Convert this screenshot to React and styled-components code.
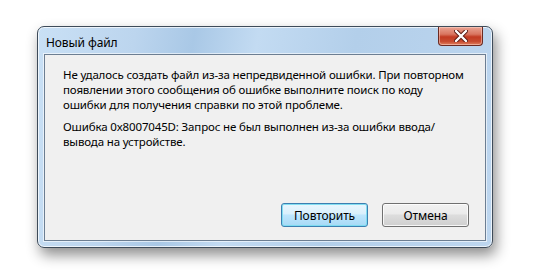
import React from "react";
import styled, { createGlobalStyle } from "styled-components";

const GlobalStyle = createGlobalStyle`
  * {
    margin: 0;
    padding: 0;
    box-sizing: border-box;
  }
  body {
    background: #ffffff;
    font-family: "Noto Sans", "Open Sans", sans-serif;
  }
`;

const Page = styled.div`
  width: 542px;
  height: 276px;
  padding: 26px 0 0 37px;
  background: #ffffff;
`;

const Window = styled.div`
  width: 456px;
  height: 222px;
  display: flex;
  flex-direction: column;
  border: 1px solid #3e4b59;
  border-radius: 7px;
  background: linear-gradient(
    100deg,
    #c9e0f5 0%,
    #bcd5ee 20%,
    #a9c8e6 32%,
    #c3dbf2 45%,
    #b3cfea 65%,
    #bdd6ef 100%
  );
  box-shadow: inset 0 0 0 1px rgba(255, 255, 255, 0.7),
    3px 7px 14px rgba(0, 0, 0, 0.45);
  padding: 0 6px 6px 6px;
`;

const TitleBar = styled.div`
  height: 27px;
  display: flex;
  align-items: flex-start;
  justify-content: space-between;
`;

const Title = styled.span`
  font-size: 12px;
  letter-spacing: -0.1px;
  color: #000;
  padding: 7px 0 0 2px;
`;

const CloseButton = styled.button`
  width: 45px;
  height: 19px;
  margin-right: 3px;
  border: 1px solid #6b2a22;
  border-top: none;
  border-radius: 0 0 4px 4px;
  background: linear-gradient(
    #eaa392 0%,
    #d97560 40%,
    #c23a22 55%,
    #c74b30 80%,
    #e0805f 100%
  );
  box-shadow: inset 0 0 0 1px rgba(255, 220, 210, 0.5);
  display: flex;
  align-items: center;
  justify-content: center;
`;

const Panel = styled.div`
  flex: 1;
  display: flex;
  flex-direction: column;
  background: #f0f0f0;
  border: 1px solid #6c7e92;
  box-shadow: 0 0 0 1px rgba(255, 255, 255, 0.6);
  padding: 12px 16px 13px 18px;
`;

const Message = styled.p`
  font-size: 11.5px;
  letter-spacing: -0.15px;
  line-height: 15px;
  color: #000;
  white-space: nowrap;
  margin-top: ${(p) => (p.$gap ? "7px" : "0")};
`;

const Buttons = styled.div`
  margin-top: auto;
  display: flex;
  justify-content: flex-end;
  gap: 14px;
`;

const Button = styled.button`
  width: 87px;
  height: 24px;
  font-family: "Noto Sans", "Open Sans", sans-serif;
  font-size: 12px;
  letter-spacing: -0.1px;
  color: #000;
  border-radius: 3px;
  border: 1px solid ${(p) => (p.$focused ? "#3c7fb1" : "#707070")};
  background: ${(p) =>
    p.$focused
      ? "linear-gradient(#eaf6fd 0%, #d9f0fc 45%, #bee6fd 50%, #a7d9f5 100%)"
      : "linear-gradient(#f2f2f2 0%, #ebebeb 45%, #dddddd 50%, #cfcfcf 100%)"};
  box-shadow: inset 0 0 0 1px
    ${(p) => (p.$focused ? "rgba(120, 220, 240, 0.9)" : "rgba(255, 255, 255, 0.8)")};
`;

function CloseIcon() {
  return (
    <svg width="14" height="12" viewBox="0 0 14 12">
      <path
        d="M2 1 L12 11 M12 1 L2 11"
        stroke="#5b1a12"
        strokeWidth="4.2"
        strokeLinecap="round"
      />
      <path
        d="M2 1 L12 11 M12 1 L2 11"
        stroke="#ffffff"
        strokeWidth="2.4"
        strokeLinecap="round"
      />
    </svg>
  );
}

export default function App() {
  return (
    <>
      <GlobalStyle />
      <Page>
        <Window>
          <TitleBar>
            <Title>Новый файл</Title>
            <CloseButton>
              <CloseIcon />
            </CloseButton>
          </TitleBar>
          <Panel>
            <Message>
              Не удалось создать файл из-за непредвиденной ошибки. При повторном
              <br />
              появлении этого сообщения об ошибке выполните поиск по коду
              <br />
              ошибки для получения справки по этой проблеме.
            </Message>
            <Message $gap>
              Ошибка 0x8007045D: Запрос не был выполнен из-за ошибки ввода/
              <br />
              вывода на устройстве.
            </Message>
            <Buttons>
              <Button $focused>Повторить</Button>
              <Button>Отмена</Button>
            </Buttons>
          </Panel>
        </Window>
      </Page>
    </>
  );
}
